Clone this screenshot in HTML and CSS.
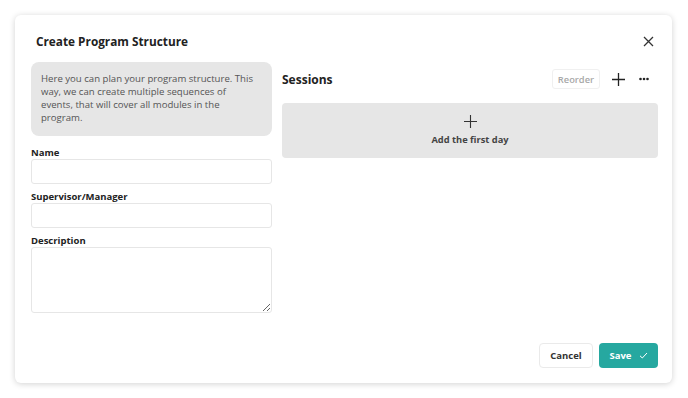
FILE: index.html
```html
<!DOCTYPE html>
<html>
<head>
    <title>Create Program Structure</title>
    <meta charset="utf-8">
    <link rel="stylesheet" href="styles.css">
</head>
<body>
    <div class="modal">
        <div class="modal-header">
            <h1>Create Program Structure</h1>
            <button class="close" aria-label="Close">
                <svg width="11" height="11" viewBox="0 0 11 11"><path d="M1 1L10 10M10 1L1 10" stroke="#333" stroke-width="1.3" fill="none"/></svg>
            </button>
        </div>

        <div class="modal-body">
            <div class="left-col">
                <div class="info">Here you can plan your program structure. This way, we can create multiple sequences of events, that will cover all modules in the program.</div>

                <label class="field-label" for="name">Name</label>
                <input id="name" class="field" type="text">

                <label class="field-label" for="supervisor">Supervisor/Manager</label>
                <input id="supervisor" class="field" type="text">

                <label class="field-label" for="description">Description</label>
                <textarea id="description" class="field textarea"></textarea>
            </div>

            <div class="right-col">
                <div class="sessions-head">
                    <h2>Sessions</h2>
                    <div class="tools">
                        <button class="reorder">Reorder</button>
                        <button class="icon-btn plus" aria-label="Add">
                            <svg width="13" height="13" viewBox="0 0 13 13"><path d="M6.5 0V13M0 6.5H13" stroke="#222" stroke-width="1.3" fill="none"/></svg>
                        </button>
                        <button class="icon-btn dots" aria-label="More">
                            <svg width="10" height="4" viewBox="0 0 10 4"><circle cx="1.5" cy="2" r="1.3" fill="#222"/><circle cx="5" cy="2" r="1.3" fill="#222"/><circle cx="8.5" cy="2" r="1.3" fill="#222"/></svg>
                        </button>
                    </div>
                </div>
                <div class="add-day">
                    <svg width="13" height="13" viewBox="0 0 13 13"><path d="M6.5 0V13M0 6.5H13" stroke="#333" stroke-width="1.1" fill="none"/></svg>
                    <span>Add the first day</span>
                </div>
            </div>
        </div>

        <div class="modal-footer">
            <button class="btn cancel">Cancel</button>
            <button class="btn save">Save
                <svg width="9" height="7" viewBox="0 0 9 7"><path d="M1 3.8L3.3 6L8 1" stroke="#fff" stroke-width="1" fill="none"/></svg>
            </button>
        </div>
    </div>
</body>
</html>
```

FILE: styles.css
```css
body {
    margin: 0;
    padding: 15px 16px 15px 15px;
    background: #fff;
    font-family: "Open Sans", "Liberation Sans", sans-serif;
    color: #222;
}
.modal {
    height: 368px;
    box-sizing: border-box;
    background: #fff;
    border-radius: 6px;
    box-shadow: 0 1px 6px rgba(0, 0, 0, 0.18);
    padding: 0 14px 15px 16px;
    display: flex;
    flex-direction: column;
}
.modal-header {
    display: flex;
    align-items: center;
    justify-content: space-between;
    height: 42px;
    padding: 5px 4px 0 5px;
}
.modal-header h1 {
    margin: 0;
    font-size: 11.8px;
    font-weight: 700;
    color: #222;
}
.close {
    border: none;
    background: none;
    padding: 0;
    display: flex;
}
.modal-body {
    display: flex;
    gap: 10px;
    flex: 1;
}
.left-col {
    width: 241px;
    display: flex;
    flex-direction: column;
}
.info {
    background: #e6e6e6;
    border-radius: 8px;
    padding: 10px 18px 12px 10px;
    font-size: 9.6px;
    line-height: 13px;
    color: #555;
    margin-bottom: 4px;
}
.field-label {
    font-size: 9.5px;
    font-weight: 700;
    color: #222;
    margin-top: 6px;
    line-height: 13px;
}
.field {
    box-sizing: border-box;
    height: 25px;
    border: 1px solid #e6e6e6;
    border-radius: 3px;
    font-family: inherit;
    margin: 0;
}
.textarea {
    height: 66px;
    resize: vertical;
}
.right-col {
    flex: 1;
    display: flex;
    flex-direction: column;
}
.sessions-head {
    display: flex;
    align-items: center;
    justify-content: space-between;
    height: 34px;
}
.sessions-head h2 {
    margin: 0;
    font-size: 12px;
    font-weight: 700;
    color: #222;
}
.tools {
    display: flex;
    align-items: center;
    padding-right: 9px;
}
.reorder {
    height: 20px;
    padding: 0 5px;
    border: 1px solid #f0f0f0;
    border-radius: 3px;
    background: #fff;
    color: #a8a8a8;
    font-family: inherit;
    font-size: 9.3px;
    font-weight: 600;
}
.icon-btn {
    border: none;
    background: none;
    padding: 0;
    display: flex;
    align-items: center;
    justify-content: center;
    height: 20px;
}
.plus {
    margin-left: 12px;
}
.dots {
    margin-left: 14px;
}
.add-day {
    margin-top: 7px;
    height: 55px;
    background: #e6e6e6;
    border-radius: 4px;
    display: flex;
    flex-direction: column;
    align-items: center;
    justify-content: center;
    gap: 5px;
}
.add-day span {
    font-size: 9.3px;
    font-weight: 700;
    color: #444;
}
.modal-footer {
    display: flex;
    justify-content: flex-end;
    gap: 6px;
}
.btn {
    height: 25px;
    border-radius: 4px;
    font-family: inherit;
    font-size: 9.5px;
    font-weight: 700;
    display: flex;
    align-items: center;
    justify-content: center;
    gap: 7px;
}
.cancel {
    width: 54px;
    border: 1px solid #eaeaea;
    background: #fff;
    color: #333;
}
.save {
    width: 59px;
    border: none;
    background: #26a8a0;
    color: #fff;
}
```
